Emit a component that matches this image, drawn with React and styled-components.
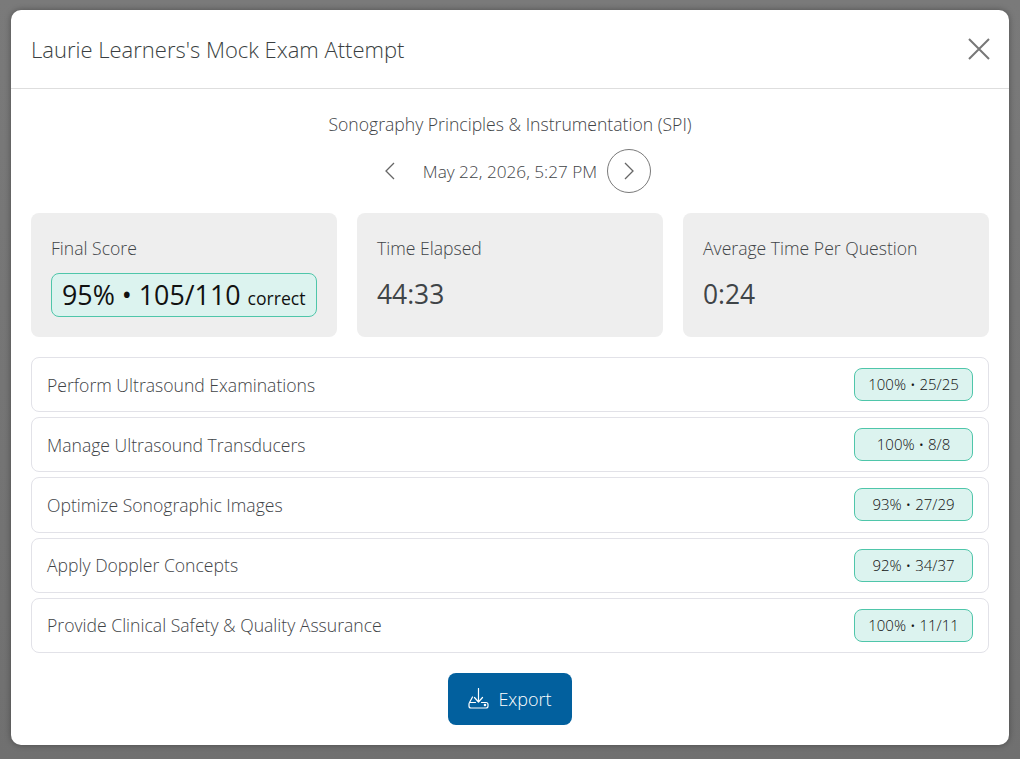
import React from 'react'
import styled, { createGlobalStyle } from 'styled-components'

const GlobalStyle = createGlobalStyle`
  html, body {
    margin: 0;
    padding: 0;
    height: 100%;
    overflow: hidden;
  }
  body {
    font-family: "Open Sans", "Noto Sans", sans-serif;
    font-weight: 300;
    background: #767676;
  }
`

const sections = [
  { name: 'Perform Ultrasound Examinations', score: '100% • 25/25' },
  { name: 'Manage Ultrasound Transducers', score: '100% • 8/8' },
  { name: 'Optimize Sonographic Images', score: '93% • 27/29' },
  { name: 'Apply Doppler Concepts', score: '92% • 34/37' },
  { name: 'Provide Clinical Safety & Quality Assurance', score: '100% • 11/11' },
]

function App() {
  return (
    <Backdrop>
      <GlobalStyle />
      <Modal>
        <Header>
          <Title>Laurie Learners's Mock Exam Attempt</Title>
          <CloseButton aria-label="Close">
            <svg width="24" height="24" viewBox="0 0 24 24" fill="none" stroke="currentColor" strokeWidth="2">
              <path d="M2 2 L22 22 M22 2 L2 22" />
            </svg>
          </CloseButton>
        </Header>
        <Body>
          <ExamName>Sonography Principles &amp; Instrumentation (SPI)</ExamName>
          <DateRow>
            <NavButton aria-label="Previous">
              <svg width="16" height="18" viewBox="0 0 16 18" fill="none" stroke="currentColor" strokeWidth="1.3">
                <path d="M11 1 L3 9 L11 17" />
              </svg>
            </NavButton>
            <DateText>May 22, 2026, 5:27 PM</DateText>
            <NavButton $outlined aria-label="Next">
              <svg width="16" height="18" viewBox="0 0 16 18" fill="none" stroke="currentColor" strokeWidth="1.3">
                <path d="M4 1 L12 9 L4 17" />
              </svg>
            </NavButton>
          </DateRow>
          <Stats>
            <StatCard>
              <StatLabel>Final Score</StatLabel>
              <ScoreBadge>95% • 105/110 <small>correct</small></ScoreBadge>
            </StatCard>
            <StatCard>
              <StatLabel>Time Elapsed</StatLabel>
              <StatValue>44:33</StatValue>
            </StatCard>
            <StatCard>
              <StatLabel>Average Time Per Question</StatLabel>
              <StatValue>0:24</StatValue>
            </StatCard>
          </Stats>
          <SectionList>
            {sections.map((s) => (
              <SectionRow key={s.name}>
                <SectionName>{s.name}</SectionName>
                <SectionBadge>{s.score}</SectionBadge>
              </SectionRow>
            ))}
          </SectionList>
          <Footer>
            <ExportButton>
              <svg width="22" height="22" viewBox="0 0 22 22" fill="none" stroke="currentColor" strokeWidth="1.2" strokeLinecap="round" strokeLinejoin="round">
                <path d="M10.5 0.5 V14 M6.5 9.5 L10.5 14 L14.5 9.5" />
                <path d="M4.5 9 L1.5 14.5 Q1 15.3 1 16.5 V18 Q1 20 3 20 H18 Q20 20 20 18 V16.5 Q20 14.5 18 14.5 H13.5 M1.8 14.5 H7.5" />
                <circle cx="17" cy="17" r="0.7" fill="currentColor" />
              </svg>
              Export
            </ExportButton>
          </Footer>
        </Body>
      </Modal>
    </Backdrop>
  )
}

const Backdrop = styled.div`
  height: 759px;
  box-sizing: border-box;
  padding: 10px 11px 14px;
  background: linear-gradient(#7a7a7a 0, #777 220px, #757575 385px, #707070 100%);
`

const Modal = styled.div`
  height: 735px;
  background: #fff;
  border-radius: 10px;
  box-shadow: 0 0 6px rgba(0, 0, 0, 0.35);
  display: flex;
  flex-direction: column;
  color: #3f4447;
`

const Header = styled.div`
  height: 79px;
  flex: none;
  box-sizing: border-box;
  padding: 0 18px 0 20px;
  border-bottom: 1px solid #dedede;
  display: flex;
  align-items: center;
  justify-content: space-between;
`

const Title = styled.h2`
  margin: 0;
  font-size: 22px;
  font-weight: 300;
  color: #3a3f42;
`

const CloseButton = styled.button`
  border: 0;
  background: none;
  padding: 0;
  color: #777;
  display: flex;
`

const Body = styled.div`
  flex: 1;
  padding: 23px 20px 20px;
  display: flex;
  flex-direction: column;
`

const ExamName = styled.div`
  text-align: center;
  font-size: 17.6px;
  line-height: 24px;
`

const DateRow = styled.div`
  margin-top: 13px;
  display: flex;
  align-items: center;
  justify-content: center;
  gap: 10px;
`

const NavButton = styled.button`
  width: 44px;
  height: 44px;
  padding: 0;
  border-radius: 50%;
  border: 1px solid ${(p) => (p.$outlined ? '#7a7a7a' : 'transparent')};
  background: none;
  color: #666;
  display: flex;
  align-items: center;
  justify-content: center;
`

const DateText = styled.span`
  font-size: 17.2px;
`

const Stats = styled.div`
  margin-top: 20px;
  display: grid;
  grid-template-columns: repeat(3, minmax(0, 1fr));
  gap: 20px;
`

const StatCard = styled.div`
  height: 124px;
  box-sizing: border-box;
  padding: 23px 20px;
  background: #eeeeee;
  border-radius: 8px;
`

const StatLabel = styled.div`
  font-size: 17.6px;
  line-height: 24px;
`

const StatValue = styled.div`
  margin-top: 12px;
  font-size: 26.4px;
  line-height: 44px;
  font-weight: 400;
`

const ScoreBadge = styled.div`
  margin-top: 13px;
  display: inline-block;
  height: 44px;
  line-height: 41px;
  box-sizing: border-box;
  padding: 0 10px;
  font-size: 26.8px;
  font-weight: 400;
  color: #111;
  white-space: nowrap;
  background: #dcf3ef;
  border: 1px solid #4fc6aa;
  border-radius: 8px;

  small {
    font-size: 17.6px;
  }
`

const SectionList = styled.div`
  margin-top: 20px;
  display: flex;
  flex-direction: column;
  gap: 5px;
`

const SectionRow = styled.div`
  height: 55.2px;
  box-sizing: border-box;
  padding: 0 15px;
  border: 1px solid #e2e2e8;
  border-radius: 8px;
  display: flex;
  align-items: center;
  justify-content: space-between;
`

const SectionName = styled.span`
  font-size: 17.6px;
`

const SectionBadge = styled.span`
  width: 119px;
  height: 33px;
  box-sizing: border-box;
  padding-bottom: 1px;
  font-size: 15px;
  color: #111;
  background: #dcf3ef;
  border: 1px solid #4fc6aa;
  border-radius: 8px;
  display: flex;
  align-items: center;
  justify-content: center;
`

const Footer = styled.div`
  margin-top: 20px;
  display: flex;
  justify-content: center;
`

const ExportButton = styled.button`
  width: 124px;
  height: 52px;
  border: 0;
  border-radius: 8px;
  background: #02609e;
  color: #fff;
  font-family: inherit;
  font-weight: 300;
  font-size: 18px;
  display: flex;
  align-items: center;
  justify-content: center;
  gap: 8px;
`

export default App
